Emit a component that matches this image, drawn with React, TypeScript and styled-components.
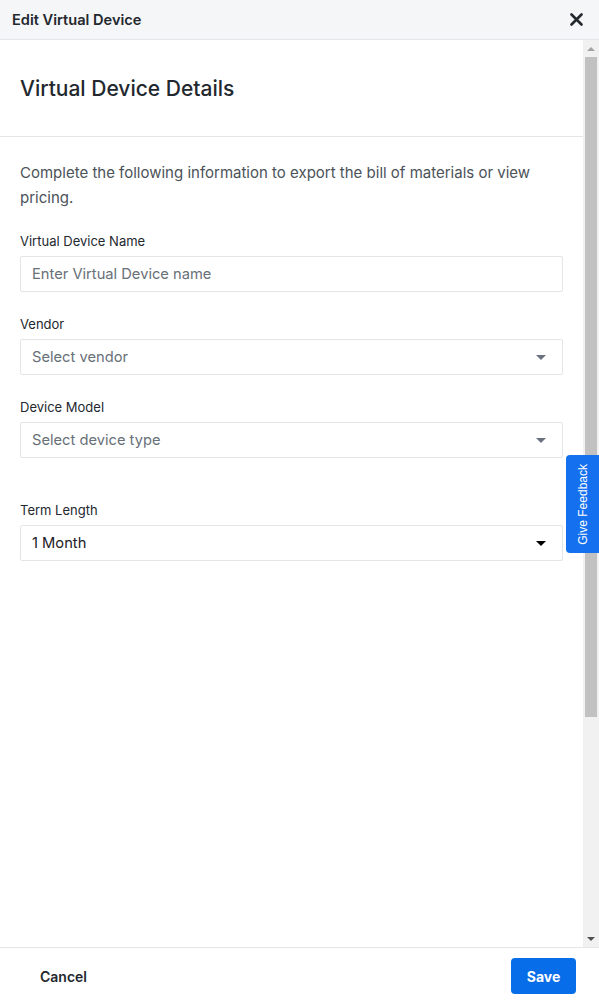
import React from "react";
import styled, { createGlobalStyle } from "styled-components";

const Global = createGlobalStyle`
  html, body { margin: 0; padding: 0; height: 100%; }
  body { font-family: Inter, "Liberation Sans", sans-serif; background: #fff; overflow: hidden; }
  #root { height: 100%; }
  * { box-sizing: border-box; }
`;

const Shell = styled.div`
  position: relative;
  height: 1004px;
  width: 599px;
  display: flex;
  flex-direction: column;
  background: #fff;
`;

const Header = styled.header`
  height: 40px;
  flex: none;
  display: flex;
  align-items: center;
  justify-content: space-between;
  padding: 0 15px 0 12px;
  background: #f5f6f8;
  border-bottom: 1px solid #e3e5e8;
`;

const HeaderTitle = styled.h1`
  margin: 0;
  font-size: 14.6px;
  font-weight: 600;
  color: #23282e;
`;

const CloseButton = styled.button`
  border: 0;
  background: transparent;
  padding: 0;
  width: 16px;
  height: 16px;
  display: flex;
  align-items: center;
  justify-content: center;
  cursor: pointer;
`;

const Body = styled.main`
  flex: 1;
  display: flex;
  min-height: 0;
`;

const Content = styled.div`
  flex: 1;
  overflow: hidden;
`;

const ScrollBar = styled.div`
  width: 16px;
  flex: none;
  display: flex;
  flex-direction: column;
  background: #f1f1f1;
`;

const ScrollArrow = styled.div<{ $down?: boolean }>`
  height: 17px;
  flex: none;
  display: flex;
  align-items: center;
  justify-content: center;
  &::before {
    content: "";
    width: 0;
    height: 0;
    border-left: 4px solid transparent;
    border-right: 4px solid transparent;
    ${(p) =>
      p.$down
        ? "border-top: 4px solid #505050;"
        : "border-bottom: 4px solid #a3a3a3;"}
  }
`;

const ScrollTrack = styled.div`
  flex: 1;
  padding: 0 2px;
`;

const ScrollThumb = styled.div`
  height: 660px;
  background: #c1c1c1;
`;

const SectionHead = styled.div`
  height: 97px;
  display: flex;
  align-items: center;
  padding: 0 20px 0;
  border-bottom: 1px solid #e3e5e8;
`;

const SectionTitle = styled.h2`
  margin: 0;
  font-size: 21px;
  font-weight: 500;
  color: #23282e;
`;

const Form = styled.div`
  padding: 23px 20px 0;
  display: flex;
  flex-direction: column;
`;

const Intro = styled.p`
  margin: 0 0 23px;
  font-size: 15px;
  line-height: 25px;
  color: #4b5259;
`;

const Field = styled.div<{ $gap?: number }>`
  display: flex;
  flex-direction: column;
  margin-bottom: ${(p) => p.$gap ?? 24}px;
`;

const Label = styled.label`
  font-size: 13px;
  line-height: 17px;
  color: #23282e;
  margin-bottom: 6px;
`;

const Box = styled.div`
  height: 36px;
  border: 1px solid #e3e5e8;
  border-radius: 2px;
  display: flex;
  align-items: center;
  justify-content: space-between;
  padding: 0 16px 0 11px;
  background: #fff;
`;

const BoxText = styled.span<{ $filled?: boolean }>`
  font-size: 14.7px;
  color: ${(p) => (p.$filled ? "#1c2025" : "#687078")};
`;

const Caret = styled.span<{ $dark?: boolean }>`
  width: 0;
  height: 0;
  border-left: 5px solid transparent;
  border-right: 5px solid transparent;
  border-top: 5px solid ${(p) => (p.$dark ? "#000" : "#6a7280")};
`;

const Footer = styled.footer`
  height: 57px;
  flex: none;
  display: flex;
  align-items: center;
  justify-content: space-between;
  padding: 0 23px 0 40px;
  border-top: 1px solid #e3e5e8;
  background: #fff;
`;

const CancelButton = styled.button`
  border: 0;
  background: transparent;
  padding: 0;
  font-family: inherit;
  font-size: 14px;
  font-weight: 600;
  color: #23282e;
  cursor: pointer;
`;

const SaveButton = styled.button`
  border: 0;
  background: #086de8;
  color: #fff;
  width: 65px;
  height: 36px;
  border-radius: 4px;
  font-family: inherit;
  font-size: 14px;
  font-weight: 700;
  cursor: pointer;
`;

const FeedbackTab = styled.button`
  position: absolute;
  right: 0;
  top: 455px;
  width: 33px;
  height: 98px;
  border: 0;
  border-radius: 4px 0 0 4px;
  background: #1470ef;
  color: #fff;
  padding: 0;
  display: flex;
  align-items: center;
  justify-content: center;
  cursor: pointer;
`;

const FeedbackText = styled.span`
  writing-mode: vertical-rl;
  transform: rotate(180deg);
  font-family: "Liberation Sans", Arial, sans-serif;
  font-size: 12px;
  white-space: nowrap;
`;

const CloseIcon = () => (
  <svg width="13" height="13" viewBox="0 0 13 13">
    <path d="M1.5 1.5 L11.5 11.5 M11.5 1.5 L1.5 11.5" stroke="#23282e" strokeWidth="2.6" strokeLinecap="round" />
  </svg>
);

export default function App() {
  return (
    <>
      <Global />
      <Shell>
        <Header>
          <HeaderTitle>Edit Virtual Device</HeaderTitle>
          <CloseButton aria-label="Close">
            <CloseIcon />
          </CloseButton>
        </Header>
        <Body>
          <Content>
            <SectionHead>
              <SectionTitle>Virtual Device Details</SectionTitle>
            </SectionHead>
            <Form>
              <Intro>
                Complete the following information to export the bill of materials or view pricing.
              </Intro>
              <Field>
                <Label>Virtual Device Name</Label>
                <Box>
                  <BoxText>Enter Virtual Device name</BoxText>
                </Box>
              </Field>
              <Field>
                <Label>Vendor</Label>
                <Box>
                  <BoxText>Select vendor</BoxText>
                  <Caret />
                </Box>
              </Field>
              <Field $gap={44}>
                <Label>Device Model</Label>
                <Box>
                  <BoxText>Select device type</BoxText>
                  <Caret />
                </Box>
              </Field>
              <Field>
                <Label>Term Length</Label>
                <Box>
                  <BoxText $filled>1 Month</BoxText>
                  <Caret $dark />
                </Box>
              </Field>
            </Form>
          </Content>
          <ScrollBar>
            <ScrollArrow />
            <ScrollTrack>
              <ScrollThumb />
            </ScrollTrack>
            <ScrollArrow $down />
          </ScrollBar>
        </Body>
        <Footer>
          <CancelButton>Cancel</CancelButton>
          <SaveButton>Save</SaveButton>
        </Footer>
        <FeedbackTab>
          <FeedbackText>Give Feedback</FeedbackText>
        </FeedbackTab>
      </Shell>
    </>
  );
}
